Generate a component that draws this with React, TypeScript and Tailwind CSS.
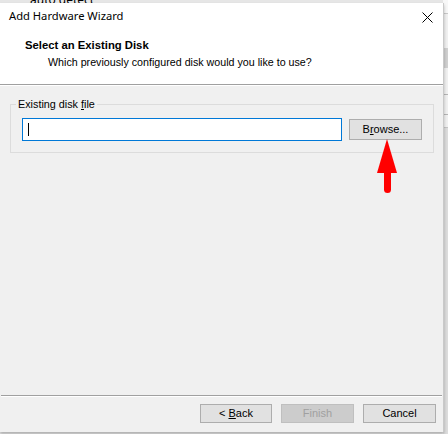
const uiFont = "font-['Liberation_Sans','Arial',sans-serif]";
const titleFont = "font-['Segoe_UI','Noto_Sans',sans-serif]";

function WinButton({
  children,
  disabled = false,
  className = "",
}: {
  children: React.ReactNode;
  disabled?: boolean;
  className?: string;
}) {
  return (
    <button
      type="button"
      disabled={disabled}
      className={`flex h-[19px] items-center justify-center border text-[11px] leading-none ${
        disabled
          ? "border-[#bfbfbf] bg-[#cccccc] text-[#a0a0a0]"
          : "border-[#adadad] bg-[#e1e1e1] text-black"
      } ${className}`}
    >
      <span className="whitespace-pre">{children}</span>
    </button>
  );
}

export default function App() {
  return (
    <div className={`relative h-[434px] w-[448px] overflow-hidden bg-[#e6e6e6] ${uiFont}`}>
      {/* window behind the dialog */}
      <div className={`absolute left-[30px] top-[-9px] text-[12px] text-black ${titleFont}`}>auto detect</div>
      <div className="absolute right-0 top-0 flex h-full w-[5px] flex-col bg-[#f0f0f0]">
        <div className="h-[13px] bg-[#f7f7f7]" />
        <div className="h-px bg-[#c8c8c8]" />
        <div className="h-[34px]" />
        <div className="h-[20px] bg-[#cfcfcf]" />
        <div className="h-[26px]" />
        <div className="h-px bg-[#b5b5b5]" />
        <div className="h-[19px]" />
        <div className="h-px bg-[#b5b5b5]" />
        <div className="h-[12px]" />
        <div className="h-px bg-[#c4c4c4]" />
        <div className="flex-1 bg-[#dcdcdc]" />
      </div>

      {/* dialog */}
      <div className="absolute left-0 top-[3px] flex h-[429px] w-[444px] flex-col border-r border-[#c9c9c9] bg-[#f0f0f0] shadow-[0_2px_3px_rgba(0,0,0,0.25)]">
        <div className="flex h-[82px] flex-col border-b border-[#a0a0a0] bg-white">
          <div className="flex h-[28px] items-start justify-between pl-[9px] pr-[10px] pt-[5px]">
            <span className={`text-[11.2px] leading-[16px] text-black ${titleFont}`}>Add Hardware Wizard</span>
            <svg width="11" height="11" viewBox="0 0 11 11" className="mt-[4px]">
              <path d="M0.5 0.5 L10.5 10.5 M10.5 0.5 L0.5 10.5" stroke="#000" strokeWidth="1" />
            </svg>
          </div>
          <div className="pl-[25px] pt-[7px] text-[11.3px] font-bold leading-[14px] text-black">
            Select an Existing Disk
          </div>
          <div className="pl-[48px] pt-[3px] text-[10.7px] leading-[14px] text-black">
            Which previously configured disk would you like to use?
          </div>
        </div>
        <div className="h-px bg-white" />

        <div className="relative flex-1 px-[10px] pt-[11px]">
          <fieldset className="w-[424px] border border-[#dcdcdc] px-[11px] pb-[11px] pt-[7px]">
            <legend className="ml-[-6px] px-[2px] text-[10.8px] leading-[14px] text-black">
              Existing disk <span className="underline">f</span>ile
            </legend>
            <div className="flex items-center gap-[7px]">
              <div className="flex h-[23px] w-[320px] items-center border border-[#0078d7] bg-white pl-[5px]">
                <div className="h-[13px] w-px bg-black" />
              </div>
              <WinButton className="h-[21px] w-[73px]">
                B<span className="underline">r</span>owse...
              </WinButton>
            </div>
          </fieldset>
          <svg
            width="22"
            height="56"
            viewBox="0 0 22 56"
            className="absolute left-[376px] top-[53px]"
          >
            <polygon points="11,0 21,34 1,34" fill="#ff0000" />
            <rect x="8" y="30" width="7" height="24" rx="3.5" fill="#ff0000" />
          </svg>
        </div>

        <div className="mx-px h-px bg-[#a0a0a0]" />
        <div className="mx-px h-px bg-white" />
        <div className="flex justify-end gap-[9px] pb-[9px] pr-[7px] pt-[7px]">
          <WinButton className="w-[72px]">
            {"< "}
            <span className="underline">B</span>ack
          </WinButton>
          <WinButton disabled className="w-[73px]">
            Finish
          </WinButton>
          <WinButton className="w-[73px]">Cancel</WinButton>
        </div>
      </div>
    </div>
  );
}
